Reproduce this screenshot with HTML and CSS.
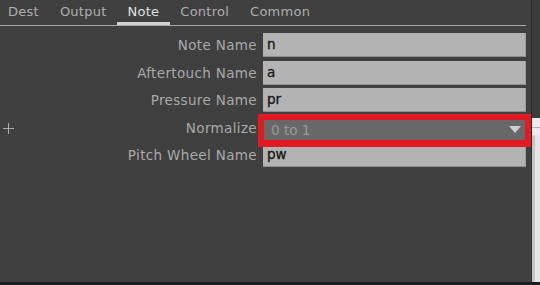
FILE: index.html
```html
<!DOCTYPE html>
<html>
<head>
<meta charset="utf-8">
<link rel="stylesheet" href="styles.css">
</head>
<body>
<div class="screen">
  <div class="panel">
    <div class="tabs">
      <div class="tab">Dest</div>
      <div class="tab">Output</div>
      <div class="tab active">Note</div>
      <div class="tab">Control</div>
      <div class="tab">Common</div>
    </div>
    <div class="form">
      <div class="row">
        <div class="label">Note Name</div>
        <div class="field">n</div>
      </div>
      <div class="row">
        <div class="label">Aftertouch Name</div>
        <div class="field">a</div>
      </div>
      <div class="row">
        <div class="label">Pressure Name</div>
        <div class="field">pr</div>
      </div>
      <div class="row">
        <div class="plus"></div>
        <div class="label">Normalize</div>
        <div class="select">
          <span class="select-text">0 to 1</span>
          <span class="caret"></span>
          <div class="highlight"></div>
        </div>
      </div>
      <div class="row">
        <div class="label">Pitch Wheel Name</div>
        <div class="field">pw</div>
      </div>
    </div>
  </div>
  <div class="side">
    <div class="side-top"></div>
    <div class="side-bottom">
      <div class="side-line"></div>
      <div class="side-cols">
        <div class="side-col-a"></div>
        <div class="side-col-b"></div>
      </div>
    </div>
  </div>
</div>
<div class="bottom-bar"></div>
</body>
</html>
```
FILE: styles.css
```css
html, body {
  margin: 0;
  padding: 0;
  width: 540px;
  height: 285px;
  overflow: hidden;
  background: #404040;
  font-family: "DejaVu Sans", Verdana, sans-serif;
  font-size: 13.5px;
}

.screen {
  display: flex;
  height: 282px;
}

.panel {
  width: 532px;
  background: #404040;
  position: relative;
}

.tabs {
  display: flex;
  height: 25px;
  border-bottom: 1px solid #a8a8a8;
  width: 526px;
}

.tab {
  padding: 0 10.5px;
  line-height: 24px;
  height: 25px;
  box-sizing: border-box;
  color: #aeaeae;
  font-size: 13px;
  letter-spacing: 0.25px;
}

.tab:first-child {
  padding-left: 8px;
}

.tab.active {
  color: #e0e0e0;
  border-bottom: 3px solid #d2d2d2;
}

.form {
  display: flex;
  flex-direction: column;
  gap: 3.5px;
  padding-top: 7px;
}

.row {
  display: grid;
  grid-template-columns: 257px 263px;
  column-gap: 6px;
  height: 24px;
  align-items: center;
  position: relative;
}

.label {
  grid-column: 1;
  text-align: right;
  color: #a9a9a9;
  letter-spacing: 0.35px;
}

.field {
  height: 24px;
  box-sizing: border-box;
  background: #b3b3b3;
  border-bottom: 1px solid #8e8e8e;
  border-right: 1px solid #9a9a9a;
  color: #151515;
  padding-left: 4px;
  line-height: 23px;
  -webkit-text-stroke: 0.3px #151515;
}

.select {
  grid-column: 2;
  height: 25px;
  box-sizing: border-box;
  background: #686868;
  border: 1px solid #555;
  position: relative;
  display: flex;
  align-items: center;
  justify-content: space-between;
  padding: 0 4px 0 7px;
}

.select-text {
  color: #9a9a9a;
  padding-top: 3px;
}

.caret {
  width: 0;
  height: 0;
  border-left: 6px solid transparent;
  border-right: 6px solid transparent;
  border-top: 7px solid #cfcfcf;
  margin-top: 2px;
}

.highlight {
  position: absolute;
  z-index: 2;
  left: -6px;
  right: -6px;
  top: -3px;
  bottom: -7px;
  border: 6px solid #e21a24;
  border-bottom-width: 7px;
}

.plus {
  position: absolute;
  left: 3px;
  top: 7px;
  width: 11px;
  height: 11px;
  background:
    linear-gradient(#c8c8c8, #c8c8c8) center / 11px 1px no-repeat,
    linear-gradient(#c8c8c8, #c8c8c8) center / 1px 11px no-repeat;
  opacity: 0.8;
}

.side {
  width: 8px;
  display: flex;
  flex-direction: column;
  border-left: 1px solid #2e2e2e;
}

.side-top {
  height: 118px;
  background: #3b3b3b;
}

.side-bottom {
  flex: 1;
  display: flex;
  flex-direction: column;
  background: #ececec;
}

.side-line {
  height: 9px;
  border-bottom: 1px solid #b0b0b0;
  margin-bottom: 7px;
}

.side-cols {
  flex: 1;
  display: flex;
}

.side-col-a {
  width: 3px;
  background: #c6c6c6;
}

.side-col-b {
  flex: 1;
  background: #e6e6e6;
}

.bottom-bar {
  height: 3px;
  background: #1e1e22;
}
```
